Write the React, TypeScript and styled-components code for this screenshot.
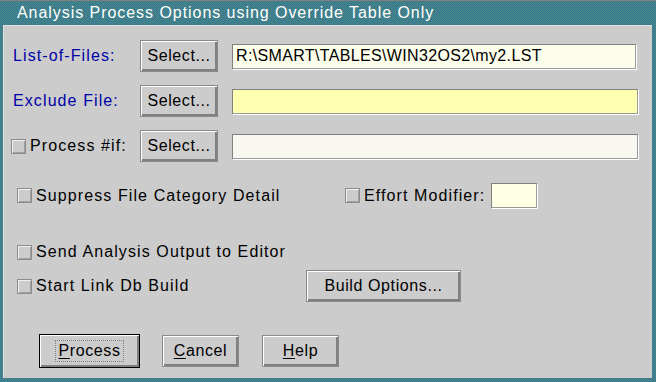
import styled, { createGlobalStyle } from "styled-components";

const GlobalStyle = createGlobalStyle`
  html, body {
    margin: 0;
    padding: 0;
    background: #cccccc;
  }
  body {
    font-family: "Liberation Sans", Arial, sans-serif;
    font-size: 16px;
    letter-spacing: 1.1px;
    color: #000;
  }
`;

const Window = styled.div`
  width: 656px;
  height: 382px;
  box-sizing: border-box;
  display: flex;
  flex-direction: column;
  padding: 0 4px 4px 3px;
  border-top: 1px solid #808080;
  background: repeating-conic-gradient(#40709c 0 25%, #3f8f7c 0 50%) 0 0 / 2px 2px;
`;

const TitleBar = styled.div`
  height: 24px;
  flex: none;
  display: flex;
  align-items: center;
  padding-left: 14px;
  color: #ffffff;
  letter-spacing: 0.95px;
`;

const Client = styled.div`
  flex: 1;
  display: flex;
  flex-direction: column;
  padding: 14px 14px 0 9px;
  background: #cccccc;
  border-top: 1px solid #e0e0e0;
  border-left: 1px solid #e0e0e0;
`;

const FileGrid = styled.div`
  display: grid;
  grid-template-columns: 127px 78px 1fr;
  grid-template-rows: repeat(3, 32px);
  row-gap: 13px;
  align-items: center;
`;

const FileLabel = styled.label<{ $blue?: boolean }>`
  display: flex;
  align-items: center;
  gap: 4px;
  color: ${(p) => (p.$blue ? "#0000a8" : "#000")};
`;

const Button = styled.button<{ $width: number; $default?: boolean }>`
  width: ${(p) => p.$width}px;
  height: ${(p) => (p.$default ? 34 : 32)}px;
  box-sizing: border-box;
  margin: 0;
  padding: 0;
  font: inherit;
  letter-spacing: 0.6px;
  color: #000;
  background: #cccccc;
  border: 1px solid ${(p) => (p.$default ? "#000" : "#8a8a8a")};
  box-shadow: inset 1px 1px 0 #ffffff, inset -2px -2px 0 #808080;
  display: flex;
  align-items: center;
  justify-content: center;
  padding-bottom: 1px;
`;

const Focus = styled.span`
  outline: 1px dotted #808080;
  outline-offset: 1px;
  padding: 0 1px;
`;

const Mnemonic = styled.span`
  text-decoration: underline;
  text-underline-offset: 2px;
`;

const TextField = styled.div<{ $fill: string; $width?: number; $right?: number }>`
  height: 25px;
  box-sizing: border-box;
  margin-left: 14px;
  margin-right: ${(p) => p.$right ?? 0}px;
  ${(p) => (p.$width ? `width: ${p.$width}px; margin-left: 0; flex: none;` : "")}
  background: ${(p) => p.$fill};
  border-top: 1px solid #808080;
  border-left: 1px solid #808080;
  border-right: 1px solid #9a9a9a;
  border-bottom: 1px solid #9a9a9a;
  box-shadow: 1px 1px 0 #ffffff;
  display: flex;
  align-items: center;
  padding-left: 3px;
  letter-spacing: 0.35px;
  white-space: nowrap;
  overflow: hidden;
`;

const Box = styled.span`
  width: 15px;
  height: 15px;
  flex: none;
  box-sizing: border-box;
  background: #cccccc;
  border: 1px solid #8c8c8c;
  box-shadow: inset 1px 1px 0 #f0f0f0, inset -1px -1px 0 #a0a0a0;
`;

const CheckItem = styled.label<{ $width?: number }>`
  display: flex;
  align-items: center;
  gap: 4px;
  flex: none;
  ${(p) => (p.$width ? `width: ${p.$width}px;` : "")}
`;

const OptionRow = styled.div<{ $top: number; $height: number }>`
  display: flex;
  align-items: center;
  margin-top: ${(p) => p.$top}px;
  height: ${(p) => p.$height}px;
  padding-left: 4px;
`;

const ButtonRow = styled.div`
  display: flex;
  align-items: center;
  gap: 22px;
  margin-top: 32px;
  padding-left: 26px;
`;

const Gap = styled.span<{ $w: number }>`
  width: ${(p) => p.$w}px;
  flex: none;
`;

export default function App() {
  return (
    <>
      <GlobalStyle />
      <Window>
        <TitleBar>Analysis Process Options using Override Table Only</TitleBar>
        <Client>
          <FileGrid>
            <FileLabel $blue>List-of-Files:</FileLabel>
            <Button $width={78}>Select...</Button>
            <TextField $fill="#fdfdec" $right={2}>R:\SMART\TABLES\WIN32OS2\my2.LST</TextField>

            <FileLabel $blue>Exclude File:</FileLabel>
            <Button $width={78}>Select...</Button>
            <TextField $fill="#ffffb0" />

            <FileLabel style={{ marginLeft: -2 }}>
              <Box />
              Process #if:
            </FileLabel>
            <Button $width={78}>Select...</Button>
            <TextField $fill="#f8f8f0" />
          </FileGrid>

          <OptionRow $top={21} $height={25}>
            <CheckItem $width={328}>
              <Box />
              Suppress File Category Detail
            </CheckItem>
            <CheckItem>
              <Box />
              Effort Modifier:
            </CheckItem>
            <Gap $w={6} />
            <TextField $fill="#ffffe4" $width={46} />
          </OptionRow>

          <OptionRow $top={34} $height={20}>
            <CheckItem>
              <Box />
              Send Analysis Output to Editor
            </CheckItem>
          </OptionRow>

          <OptionRow $top={8} $height={32}>
            <CheckItem $width={289}>
              <Box />
              Start Link Db Build
            </CheckItem>
            <Button $width={155}>Build Options...</Button>
          </OptionRow>

          <ButtonRow>
            <Button $width={101} $default>
              <Focus>
                <Mnemonic>P</Mnemonic>rocess
              </Focus>
            </Button>
            <Button $width={77}>
              <span>
                <Mnemonic>C</Mnemonic>ancel
              </span>
            </Button>
            <Button $width={77} style={{ marginLeft: 1 }}>
              <span>
                <Mnemonic>H</Mnemonic>elp
              </span>
            </Button>
          </ButtonRow>
        </Client>
      </Window>
    </>
  );
}
